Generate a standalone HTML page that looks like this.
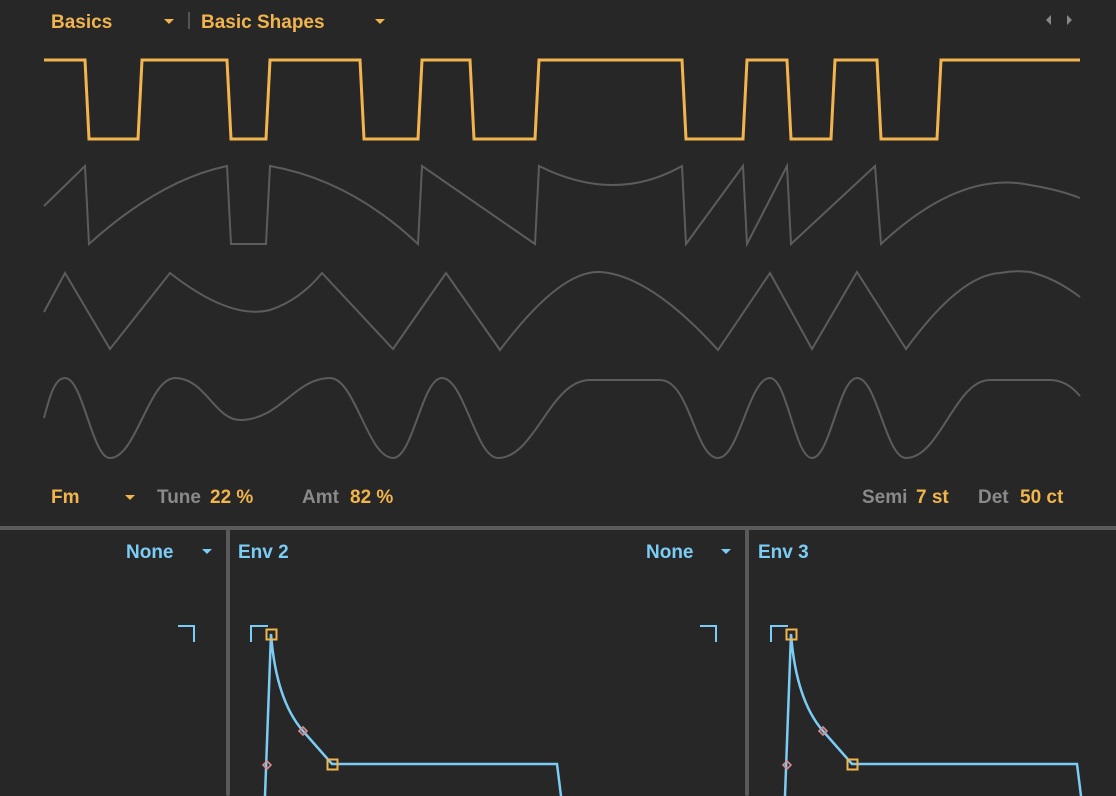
<!DOCTYPE html>
<html><head><meta charset="utf-8"><style>
html,body{margin:0;padding:0;background:#272727;}
svg{display:block}
text{font-family:"Liberation Sans",sans-serif;font-size:19px;font-weight:bold}
</style></head><body>
<svg width="1116" height="796" viewBox="0 0 1116 796" xmlns="http://www.w3.org/2000/svg">
<rect width="1116" height="796" fill="#272727"/>
<text x="51" y="28" fill="#f2b44c">Basics</text>
<path d="M164 19h10l-5 5z" fill="#f2b44c"/>
<rect x="188" y="12" width="2" height="17" fill="#555"/>
<text x="201" y="28" fill="#f2b44c">Basic Shapes</text>
<path d="M375 19h10l-5 5z" fill="#f2b44c"/>
<path d="M1046 20l5-5v10z M1067 15l5 5-5 5z" fill="#888"/>
<path d="M44 60H85L89 139H138L142 60H227L231 139H266L270 60H360L364 139H418L422 60H470L474 139H535L539 60H682L686 139H743L747 60H787L791 139H831L835 60H877L881 139H937L941 60H1080" fill="none" stroke="#f2b44c" stroke-width="3"/>
<path d="M44 206L85 166L89 244Q160 180 227 166L231 244H266L270 166Q350 180 418 244L422 166L535 244L539 166Q615 204 682 166L686 244L743 166L747 244L787 166L791 244L875 166L881 244Q960 170 1030 185Q1060 190 1080 198" fill="none" stroke="#5c5c5c" stroke-width="2"/>
<path d="M44 312L65 273L110 349L170 273Q230 320 270 310Q300 300 322 273L393 349L446 273L500 350Q560 270 600 272Q650 275 718 350L770 273L812 349L857 272L906 349Q960 275 1000 273Q1015 270 1030 272Q1055 278 1080 297" fill="none" stroke="#5c5c5c" stroke-width="2"/>
<path d="M44 418C50 395 55 378 65 378C83 378 92 458 110 458C136 458 149 378 175 378C205 378 215 420 240 420C280 420 295 378 330 378C355 378 368 458 393 458C413 458 422 378 442 378C464 378 476 458 498 458C535 458 550 380 590 380H660C690 380 695 458 718 458C739 458 749 378 770 378C787 378 795 458 812 458C830 458 839 378 857 378C877 378 886 458 906 458C940 458 955 380 990 380H1050C1065 380 1075 390 1080 396" fill="none" stroke="#5c5c5c" stroke-width="2"/>
<text x="51" y="503" fill="#f2b44c">Fm</text>
<path d="M125 495h10l-5 5z" fill="#f2b44c"/>
<text x="157" y="503" fill="#8a8a8a">Tune</text>
<text x="210" y="503" fill="#f2b44c">22 %</text>
<text x="302" y="503" fill="#8a8a8a">Amt</text>
<text x="350" y="503" fill="#f2b44c">82 %</text>
<text x="862" y="503" fill="#8a8a8a">Semi</text>
<text x="916" y="503" fill="#f2b44c">7 st</text>
<text x="978" y="503" fill="#8a8a8a">Det</text>
<text x="1020" y="503" fill="#f2b44c">50 ct</text>
<rect x="0" y="526" width="1116" height="4" fill="#5a5a5a"/>
<rect x="226" y="526" width="4" height="270" rx="2" fill="#5a5a5a"/>
<rect x="745" y="526" width="4" height="270" rx="2" fill="#5a5a5a"/>
<text x="126" y="558" fill="#7ccdf6">None</text>
<path d="M202 549h10l-5 5z" fill="#7ccdf6"/>
<path d="M178 626H194V642" fill="none" stroke="#7ccdf6" stroke-width="2"/>
<text x="238" y="558" fill="#7ccdf6">Env 2</text>
<text x="646" y="558" fill="#7ccdf6">None</text>
<path d="M721 549h10l-5 5z" fill="#7ccdf6"/>
<path d="M700 626H716V642" fill="none" stroke="#7ccdf6" stroke-width="2"/>
<path d="M251 642V626H268" fill="none" stroke="#7ccdf6" stroke-width="2"/>
<path d="M265 796L271 634Q276 700 303 731L332 764H557L561 796" fill="none" stroke="#7ccdf6" stroke-width="2.5"/>
<rect x="266.5" y="629.5" width="10" height="10" fill="none" stroke="#f2b44c" stroke-width="2"/>
<rect x="327.5" y="759.5" width="10" height="10" fill="none" stroke="#f2b44c" stroke-width="2"/>
<path d="M267 761l4 4-4 4-4-4z M303 727l4 4-4 4-4-4z" fill="none" stroke="#d98c8c" stroke-width="1.6"/>
<text x="758" y="558" fill="#7ccdf6">Env 3</text>
<path d="M771 642V626H788" fill="none" stroke="#7ccdf6" stroke-width="2"/>
<path d="M785 796L791 634Q796 700 823 731L852 764H1077L1081 796" fill="none" stroke="#7ccdf6" stroke-width="2.5"/>
<rect x="786.5" y="629.5" width="10" height="10" fill="none" stroke="#f2b44c" stroke-width="2"/>
<rect x="847.5" y="759.5" width="10" height="10" fill="none" stroke="#f2b44c" stroke-width="2"/>
<path d="M787 761l4 4-4 4-4-4z M823 727l4 4-4 4-4-4z" fill="none" stroke="#d98c8c" stroke-width="1.6"/>
</svg>
</body></html>
